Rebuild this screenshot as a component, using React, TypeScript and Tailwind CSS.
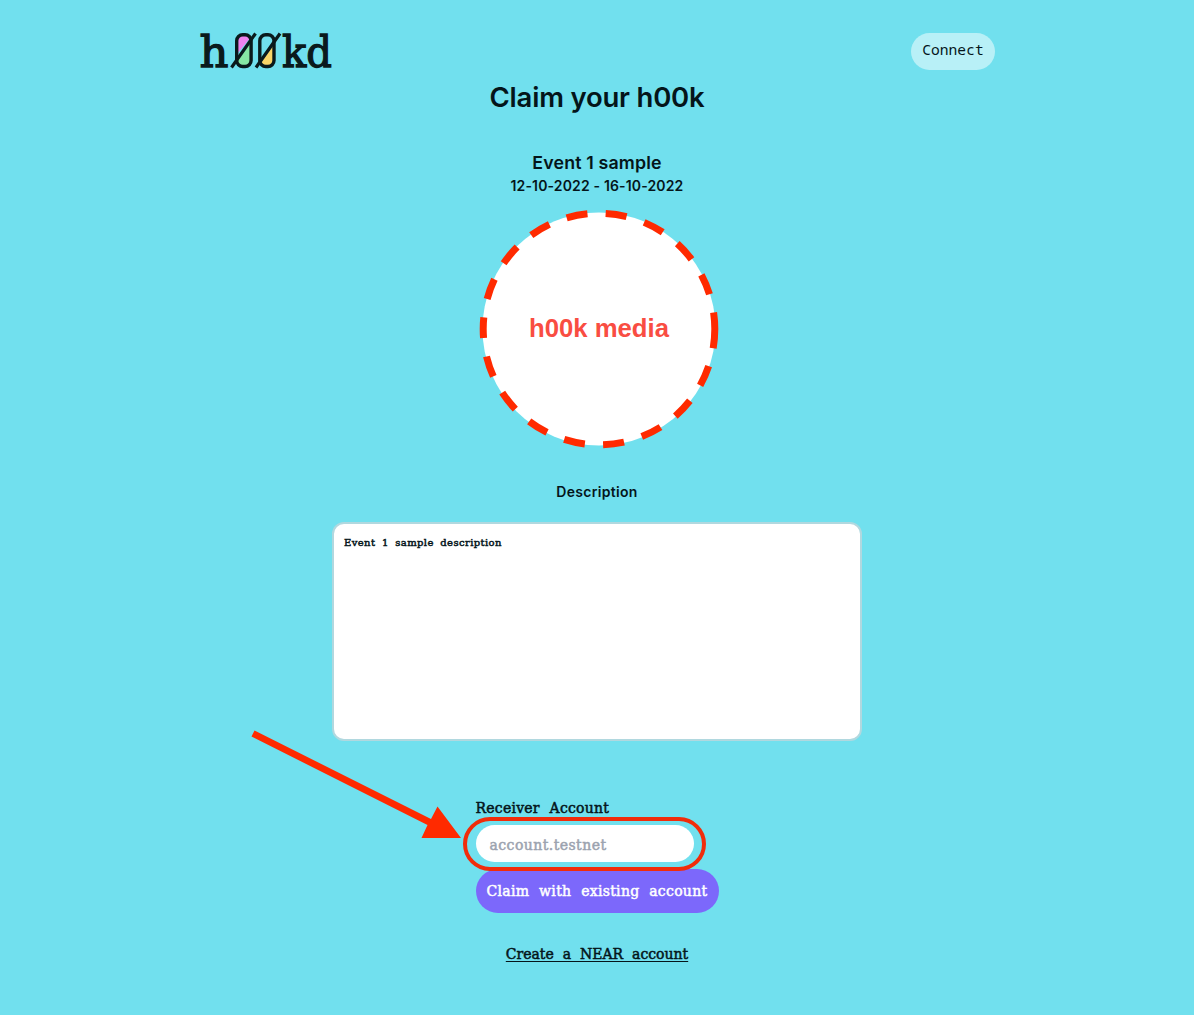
import React from 'react';

const slab = 'font-["DejaVu_Serif",serif] [-webkit-text-stroke:0.5px_currentColor] whitespace-nowrap';

function Logo() {
  return (
    <svg width="140" height="60" viewBox="196 20 140 60" role="img" aria-label="h00kd" className="-mt-[10px] -mb-[10px] block overflow-visible">
      <path d="M237 54 V41 Q237 34 244.5 34 Q250 34 251 37Z" fill="#ee82ee" />
      <path d="M251 42 V59 Q251 66 244 66 Q239 66 237 62Z" fill="#86e8a4" />
      <path d="M273 46 V60 Q273 66 267 66 Q263 66 261 62Z" fill="#f8d568" />
      <g fill="none" stroke="#0a1a1c" strokeWidth="3.4">
        <rect x="236.7" y="34.7" width="14.4" height="31.8" rx="6" />
        <rect x="259.8" y="34.7" width="14.2" height="31.8" rx="6" />
        <path d="M231.5 67.5 L255.5 33.5 M256 67.5 L280 33.5" strokeWidth="3.2" />
      </g>
      <g fill="#0a1a1c" stroke="#0a1a1c" strokeWidth="1.3" fontFamily="DejaVu Serif, serif" fontSize="43">
        <text x="199.5" y="67" textLength="29" lengthAdjust="spacingAndGlyphs">h</text>
        <text x="282" y="67" textLength="50" lengthAdjust="spacingAndGlyphs">kd</text>
      </g>
    </svg>
  );
}

function HookMedia() {
  return (
    <div className="relative mt-[11px] ml-[4px] flex h-[242px] w-[242px] items-center justify-center">
      <svg className="absolute inset-0" width="242" height="242" viewBox="0 0 242 242">
        <circle cx="121" cy="121" r="116.5" fill="white" />
        <circle cx="121" cy="121" r="115.8" fill="none" stroke="#ff2a00" strokeWidth="7" pathLength="726" strokeDasharray="21 18.5" strokeDashoffset="1.7" />
      </svg>
      <span className="relative font-['Liberation_Sans',sans-serif] text-[25.7px] leading-none font-bold whitespace-nowrap text-[#f94d42]">h00k media</span>
    </div>
  );
}

export default function App() {
  return (
    <div className="relative flex h-[1015px] w-[1194px] flex-col items-center overflow-hidden bg-[#71e0ee] text-[#04151a]">
      <header className="flex w-[796px] shrink-0 items-start justify-between pt-[30px]">
        <div className="-ml-[3px]"><Logo /></div>
        <button className="mt-[3px] h-[37px] w-[84px] rounded-full bg-[#b8f0f7] pb-[3px] font-['Noto_Sans_Mono','DejaVu_Sans_Mono',monospace] text-[14.6px]">Connect</button>
      </header>
      <main className="flex flex-col items-center font-['Inter',sans-serif] font-semibold">
        <h1 className="mt-[9px] text-[27.5px] leading-9 font-semibold tracking-[-0.2px] whitespace-nowrap">Claim your h00k</h1>
        <h2 className="mt-[36px] text-[17.8px] leading-6 tracking-[0.15px] whitespace-nowrap">Event 1 sample</h2>
        <p className="text-[14px] leading-[22px] tracking-[0.15px] whitespace-nowrap">12-10-2022 - 16-10-2022</p>
        <HookMedia />
        <h3 className="mt-[32px] text-[14px] leading-5 tracking-[0.3px]">Description</h3>
        <section className="mt-5 h-[219px] w-[530px] rounded-[12px] border-2 border-[#b1d8df] bg-white px-[10px] py-[11px]">
          <p className={`${slab} text-[10px] leading-4 font-normal tracking-[0.4px] [word-spacing:3px]`}>Event 1 sample description</p>
        </section>
        <form className="mt-[57px] flex w-[243px] flex-col items-start">
          <label className={`${slab} text-[14px] leading-5 font-normal tracking-[0.25px] [word-spacing:5px]`}>Receiver Account</label>
          <div className="relative mt-[7px] flex h-[37px] w-[218px] items-center rounded-full bg-white pt-[3px] pl-[14px]">
            <span className={`${slab} text-[14px] font-normal tracking-[0.45px] text-[#9ca3af]`}>account.testnet</span>
            <span className="absolute -top-[8px] -left-[13px] z-10 h-[54px] w-[243px] rounded-full border-4 border-[#f12c0a]" />
          </div>
          <button type="button" className={`${slab} mt-[7px] h-[44px] w-[243px] rounded-full bg-[#7c68fb] pt-px text-[14px] font-normal tracking-[0.3px] text-white [word-spacing:5px]`}>Claim with existing account</button>
        </form>
        <a className={`${slab} mt-[31px] text-[14px] leading-5 font-normal underline underline-offset-2 [word-spacing:4.5px]`}>Create a NEAR account</a>
      </main>
      <svg className="absolute top-[725px] left-[245px]" width="220" height="120" viewBox="245 725 220 120" fill="#ff2a00">
        <path d="M254.5 730.5 L251.5 736.5 L427.5 825 L421.5 838 L461 838 L437.5 806.5 L431 819Z" />
      </svg>
    </div>
  );
}
